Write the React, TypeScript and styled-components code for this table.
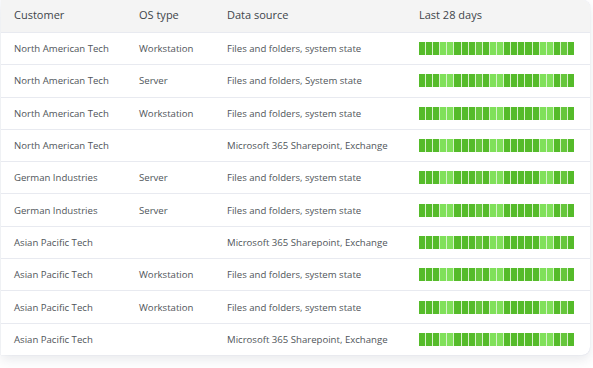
import React from 'react';
import styled, { createGlobalStyle } from 'styled-components';

const GlobalStyle = createGlobalStyle`
  body {
    margin: 0;
    background: #ffffff;
    font-family: 'Open Sans', 'Noto Sans', sans-serif;
  }
`;

const Page = styled.div`
  width: 593px;
  height: 368px;
  padding: 0 3px 0 1px;
  box-sizing: border-box;
`;

const Card = styled.div`
  background: #ffffff;
  border-radius: 0 8px 8px 0;
  box-shadow: 0 5px 12px rgba(40, 50, 80, 0.1), 0 0 1px rgba(60, 80, 160, 0.25);
  overflow: hidden;
`;

const Grid = styled.div`
  display: grid;
  grid-template-columns: 138px 88px 192px 1fr;
`;

const HeaderRow = styled(Grid)`
  height: 32px;
  box-sizing: border-box;
  padding-bottom: 3px;
  align-items: center;
  background: #f4f4f4;
`;

const HeaderCell = styled.div`
  font-size: 11px;
  color: #40454a;
  &:first-child {
    padding-left: 13px;
  }
`;

const Row = styled(Grid)`
  height: 32.3px;
  box-sizing: border-box;
  align-items: center;
  border-top: 1px solid #e8eaf0;
`;

const Cell = styled.div`
  font-size: 9.6px;
  color: #50555a;
  white-space: nowrap;
  &:first-child {
    padding-left: 13px;
  }
`;

const Bars = styled.div`
  display: flex;
  gap: 1px;
  width: 155px;
  height: 13px;
  background: #d8f2cc;
`;

const Bar = styled.span<{ $tone: 'dark' | 'mid' | 'light' }>`
  flex: 1;
  background: ${({ $tone }) =>
    $tone === 'dark' ? '#55bb2a' : $tone === 'mid' ? '#66c63c' : '#80e05a'};
`;

// d = dark, m = mid, l = light
const PATTERN = 'dddlldddmdlldddddlldmd';

const TONES: Record<string, 'dark' | 'mid' | 'light'> = {
  d: 'dark',
  m: 'mid',
  l: 'light',
};

const ROWS = [
  ['North American Tech', 'Workstation', 'Files and folders, system state'],
  ['North American Tech', 'Server', 'Files and folders, System state'],
  ['North American Tech', 'Workstation', 'Files and folders, system state'],
  ['North American Tech', '', 'Microsoft 365 Sharepoint, Exchange'],
  ['German Industries', 'Server', 'Files and folders, system state'],
  ['German Industries', 'Server', 'Files and folders, system state'],
  ['Asian Pacific Tech', '', 'Microsoft 365 Sharepoint, Exchange'],
  ['Asian Pacific Tech', 'Workstation', 'Files and folders, system state'],
  ['Asian Pacific Tech', 'Workstation', 'Files and folders, system state'],
  ['Asian Pacific Tech', '', 'Microsoft 365 Sharepoint, Exchange'],
];

const History: React.FC = () => (
  <Bars>
    {PATTERN.split('').map((c, i) => (
      <Bar key={i} $tone={TONES[c]} />
    ))}
  </Bars>
);

export default function App() {
  return (
    <Page>
      <GlobalStyle />
      <Card>
        <HeaderRow>
          <HeaderCell>Customer</HeaderCell>
          <HeaderCell>OS type</HeaderCell>
          <HeaderCell>Data source</HeaderCell>
          <HeaderCell>Last 28 days</HeaderCell>
        </HeaderRow>
        {ROWS.map((r, i) => (
          <Row key={i}>
            <Cell>{r[0]}</Cell>
            <Cell>{r[1]}</Cell>
            <Cell>{r[2]}</Cell>
            <Cell>
              <History />
            </Cell>
          </Row>
        ))}
      </Card>
    </Page>
  );
}
